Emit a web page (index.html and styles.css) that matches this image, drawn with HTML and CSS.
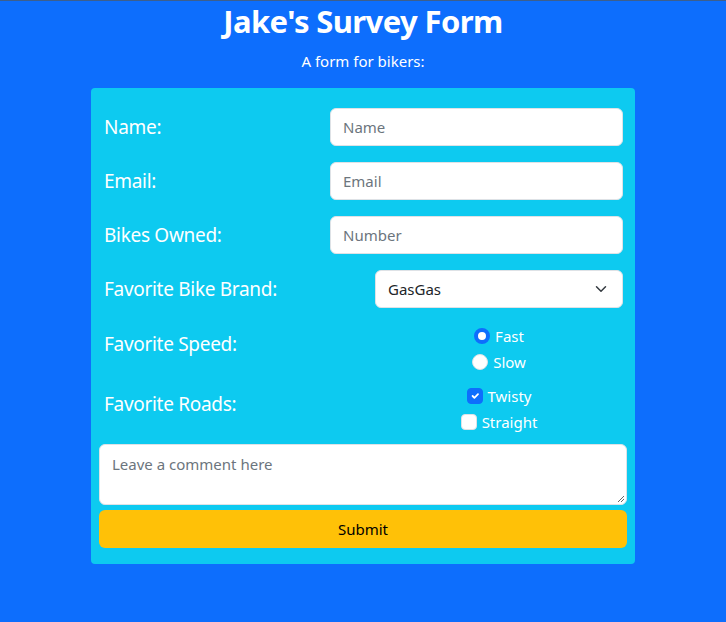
FILE: index.html
```html
<!DOCTYPE html>
<html lang="en">
<head>
<meta charset="utf-8">
<title>Jake's Survey Form</title>
<link rel="stylesheet" href="styles.css">
</head>
<body>
<div class="topline"></div>
<h1 class="title">Jake's Survey Form</h1>
<p class="subtitle">A form for bikers:</p>
<form class="card">
  <div class="row">
    <label class="lbl" for="name">Name:</label>
    <input class="field wide" id="name" type="text" placeholder="Name">
  </div>
  <div class="row">
    <label class="lbl" for="email">Email:</label>
    <input class="field wide" id="email" type="email" placeholder="Email">
  </div>
  <div class="row">
    <label class="lbl" for="num">Bikes Owned:</label>
    <input class="field wide" id="num" type="text" placeholder="Number">
  </div>
  <div class="row">
    <label class="lbl" for="brand">Favorite Bike Brand:</label>
    <div class="field narrow select">
      <span>GasGas</span>
      <svg class="chev" width="12" height="12" viewBox="0 0 16 16"><path d="M2 5l6 6 6-6" fill="none" stroke="#343a40" stroke-width="2" stroke-linecap="round" stroke-linejoin="round"/></svg>
    </div>
  </div>
  <div class="row multi">
    <span class="lbl up">Favorite Speed:</span>
    <div class="choices speed">
      <label class="opt"><span class="radio on"></span>Fast</label>
      <label class="opt"><span class="radio"></span>Slow</label>
    </div>
  </div>
  <div class="row multi">
    <span class="lbl up">Favorite Roads:</span>
    <div class="choices roads">
      <label class="opt"><span class="check on"><svg width="12" height="12" viewBox="0 0 20 20"><path d="M6 10l3 3 6-6" fill="none" stroke="#fff" stroke-width="3" stroke-linecap="round" stroke-linejoin="round"/></svg></span>Twisty</label>
      <label class="opt"><span class="check"></span>Straight</label>
    </div>
  </div>
  <div class="comment">
    <span class="ph">Leave a comment here</span>
    <svg class="grip" width="10" height="10" viewBox="0 0 10 10"><path d="M9 3L3 9M9 6L6 9" stroke="#666" stroke-width="1"/></svg>
  </div>
  <button class="submit" type="button">Submit</button>
</form>
</body>
</html>
```
FILE: styles.css
```css
html, body {
  margin: 0;
  padding: 0;
}
body {
  background: #0d6efd;
  font-family: "Noto Sans", "Open Sans", sans-serif;
  color: #fff;
  height: 622px;
}
.topline {
  height: 1px;
  background: #3d5f8c;
}
.title {
  margin: 0 0 8px;
  text-align: center;
  font-size: 31px;
  line-height: 40px;
  font-weight: 700;
  letter-spacing: -0.6px;
}
.subtitle {
  margin: 0 0 15px;
  text-align: center;
  font-size: 15px;
  line-height: 24px;
}
.card {
  width: 528px;
  margin-left: 91px;
  background: #0dcaf0;
  border-radius: 4px;
  padding: 20px 8px 16px;
  display: flex;
  flex-direction: column;
}
.row {
  display: flex;
  align-items: center;
  justify-content: space-between;
  padding: 0 4px 0 5px;
  margin-bottom: 16px;
}
.lbl {
  font-size: 19px;
  letter-spacing: -0.3px;
  color: #fff;
}
.lbl.up {
  margin-bottom: 10px;
}
.field {
  box-sizing: border-box;
  height: 38px;
  border: 1px solid #dee2e6;
  border-radius: 6px;
  background: #fff;
  font-family: inherit;
  font-size: 15px;
  padding: 0 12px;
  color: #212529;
}
.field::placeholder {
  color: #6c757d;
}
.wide {
  width: 293px;
}
.narrow {
  width: 248px;
}
.select {
  display: flex;
  align-items: center;
  justify-content: space-between;
}
.chev {
  display: block;
  margin-right: 3px;
}
.multi {
  margin-bottom: 10px;
}
.choices {
  width: 248px;
  display: flex;
  flex-direction: column;
  align-items: center;
  gap: 2px;
}
.opt {
  display: flex;
  align-items: center;
  gap: 5px;
  font-size: 15px;
  line-height: 24px;
}
.radio, .check {
  box-sizing: border-box;
  width: 16px;
  height: 16px;
  background: #fff;
  border: 1px solid #dee2e6;
  display: inline-flex;
  align-items: center;
  justify-content: center;
}
.radio {
  border-radius: 50%;
}
.radio.on {
  background: #fff;
  border: 4px solid #0d6efd;
}
.check {
  border-radius: 4px;
}
.check.on {
  background: #0d6efd;
  border-color: #0d6efd;
}
.check svg {
  display: block;
}
.comment {
  position: relative;
  box-sizing: border-box;
  height: 61px;
  background: #fff;
  border: 1px solid #dee2e6;
  border-radius: 6px;
  padding: 8px 12px;
}
.ph {
  color: #6c757d;
  font-size: 15px;
  line-height: 22px;
}
.grip {
  position: absolute;
  right: 1px;
  bottom: 1px;
}
.submit {
  margin-top: 5px;
  height: 38px;
  border: none;
  border-radius: 6px;
  background: #ffc107;
  color: #000;
  font-family: inherit;
  font-size: 15px;
}
```
